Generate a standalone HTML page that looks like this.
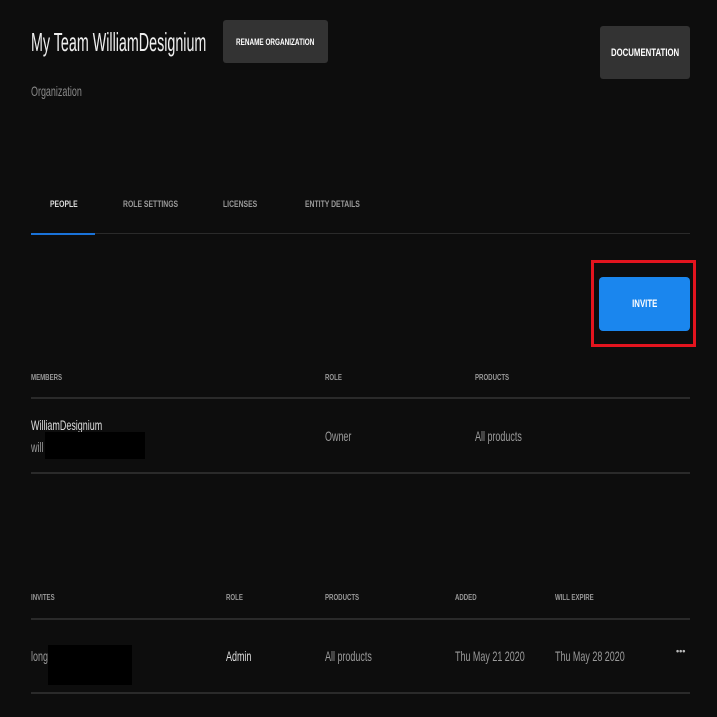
<!DOCTYPE html>
<html><head><meta charset="utf-8"><style>
html,body{margin:0;padding:0;background:#0d0d0d;width:717px;height:717px;overflow:hidden;font-family:"Liberation Sans",sans-serif;}
.a{position:absolute;white-space:nowrap;}
.n{transform-origin:0 0;transform:scaleX(0.76);}
.c{transform-origin:0 0;transform:scaleX(0.64);}
.btn{position:absolute;background:#333;border-radius:3px;color:#fff;font-weight:bold;font-size:11px;display:flex;align-items:center;justify-content:center;white-space:nowrap;}
.btn span{display:inline-block;transform:scaleX(0.71);white-space:nowrap;}
.h{font-size:9px;font-weight:bold;color:#9a9a9a;}
.t{font-size:14px;color:#9a9a9a;}
.line{position:absolute;left:31px;width:659px;height:2px;background:#2a2a2a;}
</style></head><body>
<div class="a" style="left:31px;top:27px;font-size:26px;color:#eee;transform-origin:0 0;transform:scaleX(0.55)">My Team WilliamDesignium</div>
<div class="btn" style="left:223px;top:20px;width:105px;height:43px;font-size:9px"><span>RENAME ORGANIZATION</span></div>
<div class="btn" style="left:600px;top:26px;width:90px;height:53px;"><span>DOCUMENTATION</span></div>
<div class="a c" style="left:31px;top:83px;font-size:14px;color:#8a8a8a">Organization</div>
<div class="a n h" style="left:50px;top:199px;color:#ddd">PEOPLE</div>
<div class="a n h" style="left:123px;top:199px">ROLE SETTINGS</div>
<div class="a n h" style="left:223px;top:199px">LICENSES</div>
<div class="a n h" style="left:305px;top:199px">ENTITY DETAILS</div>
<div class="line" style="top:233px;height:1px"></div>
<div class="a" style="left:31px;top:233px;width:64px;height:2px;background:#1a73d9"></div>
<div class="a" style="left:591px;top:260px;width:99px;height:81px;border:3px solid #e3141e"></div>
<div class="btn" style="left:599px;top:277px;width:91px;height:54px;background:#1a86ee;border-radius:4px;font-size:11px"><span>INVITE</span></div>
<div class="a n h" style="left:31px;top:373px;font-size:8px">MEMBERS</div>
<div class="a n h" style="left:325px;top:373px;font-size:8px">ROLE</div>
<div class="a n h" style="left:475px;top:373px;font-size:8px">PRODUCTS</div>
<div class="line" style="top:397px"></div>
<div class="a c" style="left:31px;top:417px;font-size:14px;color:#ddd">WilliamDesignium</div>
<div class="a c t" style="left:31px;top:439px">will</div>
<div class="a" style="left:45px;top:432px;width:100px;height:27px;background:#000"></div>
<div class="a c t" style="left:325px;top:428px">Owner</div>
<div class="a c t" style="left:475px;top:428px">All products</div>
<div class="line" style="top:472px"></div>
<div class="a n h" style="left:31px;top:593px;font-size:8px">INVITES</div>
<div class="a n h" style="left:226px;top:593px;font-size:8px">ROLE</div>
<div class="a n h" style="left:325px;top:593px;font-size:8px">PRODUCTS</div>
<div class="a n h" style="left:455px;top:593px;font-size:8px">ADDED</div>
<div class="a n h" style="left:555px;top:593px;font-size:8px">WILL EXPIRE</div>
<div class="line" style="top:618px"></div>
<div class="a c t" style="left:31px;top:648px">long</div>
<div class="a" style="left:48px;top:645px;width:84px;height:40px;background:#000"></div>
<div class="a c t" style="left:226px;top:648px;color:#ddd">Admin</div>
<div class="a c t" style="left:325px;top:648px">All products</div>
<div class="a c t" style="left:455px;top:648px">Thu May 21 2020</div>
<div class="a c t" style="left:555px;top:648px">Thu May 28 2020</div>
<div class="a" style="left:676px;top:646px;font-size:9px;color:#bbb;font-weight:bold">•••</div>
<div class="line" style="top:692px"></div>
</body></html>
